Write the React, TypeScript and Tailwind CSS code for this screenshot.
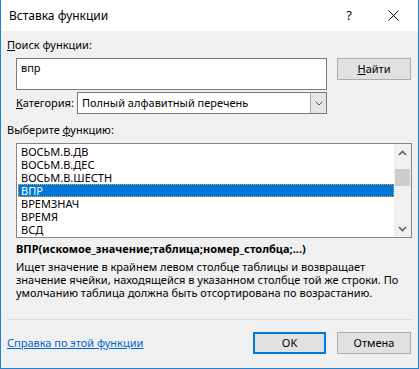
const items = ['ВОСЬМ.В.ДВ', 'ВОСЬМ.В.ДЕС', 'ВОСЬМ.В.ШЕСТН', 'ВПР', 'ВРЕМЗНАЧ', 'ВРЕМЯ', 'ВСД']

function Chevron({ up }: { up?: boolean }) {
  return (
    <svg width="9" height="6" viewBox="0 0 9 6">
      <path
        d={up ? 'M1 5 L4.5 1.5 L8 5' : 'M1 1 L4.5 4.5 L8 1'}
        fill="none"
        stroke="#606060"
        strokeWidth="1.6"
      />
    </svg>
  )
}

export default function App() {
  return (
    <div className="w-[419px] h-[369px] bg-[#f0f0f0] border-x border-b border-[#1883d7] flex flex-col text-[11px] text-black font-['Noto_Sans',sans-serif] overflow-hidden">
      {/* title bar */}
      <div className="h-[31px] bg-white flex items-center pl-[8px] shrink-0">
        <span className="text-[12px]">Вставка функции</span>
        <span className="ml-auto mr-[36px] text-[13px]">?</span>
        <svg width="11" height="11" viewBox="0 0 11 11" className="mr-[19px]">
          <path d="M0.5 0.5 L10.5 10.5 M10.5 0.5 L0.5 10.5" stroke="#000" strokeWidth="1" />
        </svg>
      </div>

      <div className="flex flex-col px-[6px]">
        <div className="mt-[6px] leading-[16px]">
          <span className="underline">П</span>оиск функции:
        </div>

        <div className="flex mt-[5px] ml-[9px] gap-[10px]">
          <div className="w-[311px] h-[32px] bg-white border border-[#7a7a7a] px-[4px] leading-[18px]">
            впр
          </div>
          <button className="w-[74px] h-[22px] bg-[#e1e1e1] border border-[#adadad] leading-[18px]">
            <span className="underline">Н</span>айти
          </button>
        </div>

        <div className="flex items-center mt-[2px] ml-[9px]">
          <span className="w-[61px] leading-[16px]">
            <span className="underline">К</span>атегория:
          </span>
          <div className="w-[250px] h-[22px] bg-white border border-[#7a7a7a] flex">
            <span className="pl-[4px] leading-[20px] flex-1">Полный алфавитный перечень</span>
            <div className="w-[16px] h-full bg-[#e5e5e5] border-l border-[#acacac] flex items-center justify-center">
              <svg width="8" height="5" viewBox="0 0 8 5">
                <path d="M0.5 0.5 L4 4 L7.5 0.5" fill="none" stroke="#606060" strokeWidth="1" />
              </svg>
            </div>
          </div>
        </div>

        <div className="mt-[8px] leading-[16px]">
          Выберите <span className="underline">ф</span>ункцию:
        </div>

        <div className="mt-[5px] ml-[9px] w-[396px] h-[95px] bg-white border border-[#828790] flex">
          <div className="flex-1 flex flex-col pl-[1px] pt-[1px]">
            {items.map((it) => (
              <div
                key={it}
                className={
                  it === 'ВПР'
                    ? 'h-[13px] leading-[13px] pl-[3px] bg-[#0078d7] text-white outline outline-1 outline-dotted outline-[#f0a040] -outline-offset-1'
                    : 'h-[13px] leading-[13px] pl-[3px]'
                }
              >
                {it}
              </div>
            ))}
          </div>
          <div className="w-[17px] h-full bg-[#f0f0f0] flex flex-col items-center">
            <div className="h-[17px] flex items-center justify-center">
              <Chevron up />
            </div>
            <div className="w-[15px] h-[17px] bg-[#cdcdcd] mt-[8px]" />
            <div className="mt-auto h-[17px] flex items-center justify-center">
              <Chevron />
            </div>
          </div>
        </div>

        <div className="mt-[4px] ml-[9px] font-bold leading-[14px]">
          ВПР(искомое_значение;таблица;номер_столбца;...)
        </div>
        <div className="mt-[4px] ml-[9px] leading-[13px] whitespace-nowrap">
          Ищет значение в крайнем левом столбце таблицы и возвращает
          <br />
          значение ячейки, находящейся в указанном столбце той же строки. По
          <br />
          умолчанию таблица должна быть отсортирована по возрастанию.
        </div>

        <div className="mt-[20px] h-px bg-[#dcdcdc] w-[405px]" />

        <div className="flex items-center mt-[12px]">
          <span className="text-[#0066cc] underline leading-[16px]">Справка по этой функции</span>
          <button className="ml-auto w-[73px] h-[22px] bg-[#e1e1e1] border-2 border-[#0078d7] leading-[18px]">
            OK
          </button>
          <button className="ml-[11px] mr-[1px] w-[74px] h-[22px] bg-[#e1e1e1] border border-[#adadad] leading-[20px]">
            Отмена
          </button>
        </div>
      </div>
    </div>
  )
}
